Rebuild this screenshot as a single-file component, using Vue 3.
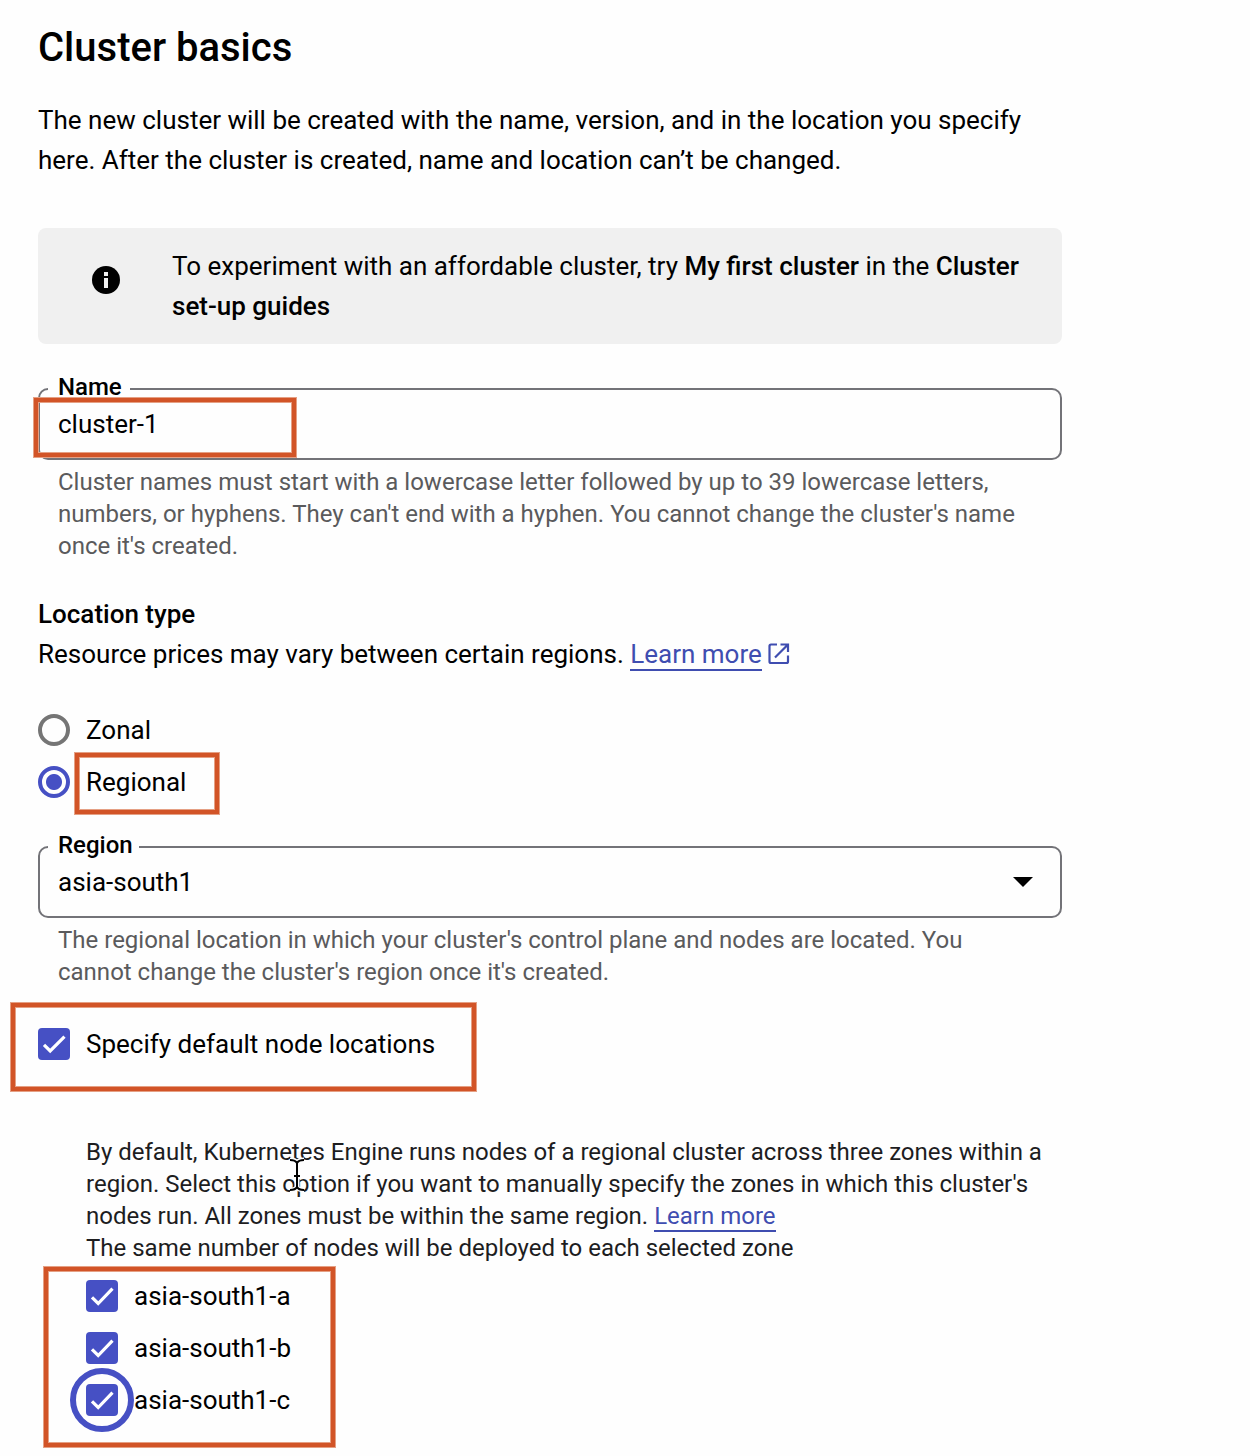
<script setup>
import { ref } from 'vue'

const locationTypes = ['Zonal', 'Regional']
const selected = ref('Regional')
const zones = ['asia-south1-a', 'asia-south1-b', 'asia-south1-c']
const focusedZone = ref('asia-south1-c')
</script>

<template>
  <main class="page">
    <h1 class="title">Cluster basics</h1>
    <p class="body intro">
      The new cluster will be created with the name, version, and in the location you specify<br />
      here. After the cluster is created, name and location can’t be changed.
    </p>

    <section class="notice">
      <svg class="info" width="28" height="28" viewBox="0 0 28 28">
        <circle cx="14" cy="14" r="14" />
        <path d="M12 6h4v4h-4zM12 12h4v10h-4z" fill="#f0f0f0" />
      </svg>
      <p class="body notice-text">
        To experiment with an affordable cluster, try <b>My first cluster</b> in the <b>Cluster<br />
        set-up guides</b>
      </p>
    </section>

    <div class="field name-field">
      <span class="label">Name</span>
      <span class="value">cluster-1</span>
      <i class="mark mark-name"></i>
    </div>
    <p class="hint">
      Cluster names must start with a lowercase letter followed by up to 39 lowercase letters,<br />
      numbers, or hyphens. They can't end with a hyphen. You cannot change the cluster's name<br />
      once it's created.
    </p>

    <h2 class="body subtitle">Location type</h2>
    <p class="body">
      Resource prices may vary between certain regions. <a class="link">Learn more</a>
      <svg class="external" width="22" height="22" viewBox="0 0 22 22" fill="none" stroke="#3f4db0" stroke-width="2.2">
        <path d="M9 1.500H3Q1.500 1.500 1.500 3V18.500Q1.500 20 3 20H18.500Q20 20 20 18.500V12.500M12.500 1.500H20V9M20 1.500L7 14.500" />
      </svg>
    </p>

    <div class="radios">
      <div v-for="type in locationTypes" :key="type" class="option">
        <span class="radio" :class="{ on: type === selected }"></span>
        <span>{{ type }}</span>
        <i v-if="type === selected" class="mark mark-radio"></i>
      </div>
    </div>

    <div class="field region-field">
      <span class="label region-label">Region</span>
      <span class="value">asia-south1</span>
      <svg class="arrow" width="20" height="10" viewBox="0 0 20 10"><path d="M0 0H20L10 10Z" /></svg>
    </div>
    <p class="hint">
      The regional location in which your cluster's control plane and nodes are located. You<br />
      cannot change the cluster's region once it's created.
    </p>

    <div class="option specify">
      <span class="check">
        <svg width="32" height="32" viewBox="0 0 32 32"><path d="M6 16.800L12.200 23L26.500 8.700" /></svg>
      </span>
      <span>Specify default node locations</span>
      <i class="mark mark-specify"></i>
    </div>

    <section class="nodes">
      <p class="hint detail">
        By default, Kubernetes Engine runs nodes of a regional cluster across three zones within a<br />
        region. Select this option if you want to manually specify the zones in which this cluster's<br />
        nodes run. All zones must be within the same region. <a class="link">Learn more</a><br />
        The same number of nodes will be deployed to each selected zone
      </p>
      <svg class="cursor" width="22" height="42" viewBox="0 0 22 42" fill="none">
        <path d="M4 5Q9.500 5 11 8Q12.500 5 18 5M11 7V33M4 35Q9.500 35 11 32Q12.500 35 18 35M7 21H15" stroke="#fefefe" stroke-width="5" />
        <path d="M4 5Q9.500 5 11 8Q12.500 5 18 5M11 7V33M4 35Q9.500 35 11 32Q12.500 35 18 35M8 21H14" stroke="#000" stroke-width="2" />
      </svg>
      <div class="zones">
        <div v-for="zone in zones" :key="zone" class="option">
          <span class="check" :class="{ focused: zone === focusedZone }">
            <svg width="32" height="32" viewBox="0 0 32 32"><path d="M6 17.300L12.200 23.500L26.500 8.700" /></svg>
          </span>
          <span>{{ zone }}</span>
        </div>
        <i class="mark mark-zones"></i>
      </div>
    </section>
  </main>
</template>

<style>
body {
  margin: 0;
  background: #fefefe;
}
</style>

<style scoped>
.page {
  box-sizing: border-box;
  width: 1250px;
  height: 1456px;
  padding: 20px 188px 0 38px;
  overflow: hidden;
  background: #fefefe;
  color: #000;
  font-family: Roboto, sans-serif;
}
h1, h2, p {
  margin: 0;
}
.title {
  height: 56px;
  font-size: 40px;
  font-weight: 500;
  line-height: 56px;
}
.body, .option, .value {
  font-size: 26px;
  line-height: 40px;
  white-space: nowrap;
}
.intro {
  margin-top: 24px;
}
b {
  font-weight: 500;
}
.notice {
  display: flex;
  align-items: flex-start;
  box-sizing: border-box;
  height: 116px;
  margin-top: 48px;
  padding: 18px 0 0 54px;
  border-radius: 8px;
  background: #f0f0f0;
}
.info {
  margin-top: 20px;
}
.notice-text {
  margin-left: 52px;
}
.field {
  position: relative;
  display: flex;
  align-items: center;
  justify-content: space-between;
  box-sizing: border-box;
  height: 72px;
  padding: 0 27px 0 18px;
  border: 2px solid #737378;
  border-radius: 10px;
}
.name-field {
  margin-top: 44px;
}
.region-field {
  margin-top: 38px;
}
.label {
  position: absolute;
  top: -19px;
  left: 8px;
  width: 72px;
  padding-left: 10px;
  background: #fefefe;
  font-size: 24px;
  font-weight: 500;
  line-height: 32px;
}
.region-label {
  width: 81px;
}
.hint {
  margin-top: 6px;
  padding-left: 20px;
  color: #5a5a5c;
  font-size: 24px;
  line-height: 32px;
  white-space: nowrap;
}
.subtitle {
  margin-top: 32px;
  font-weight: 500;
}
.link {
  border-bottom: 2px solid #3f4db0;
  color: #3f4db0;
}
.external {
  margin-left: 6px;
  vertical-align: -2px;
}
.radios {
  margin-top: 30px;
}
.option {
  position: relative;
  display: flex;
  align-items: center;
  gap: 16px;
  height: 52px;
}
.radio {
  box-sizing: border-box;
  width: 32px;
  height: 32px;
  border: 4px solid #757575;
  border-radius: 50%;
}
.radio.on {
  border-color: #4650c4;
  background: radial-gradient(circle, #4650c4 7.500px, #fefefe 8.500px);
}
.specify {
  margin-top: 30px;
}
.check {
  position: relative;
  width: 32px;
  height: 32px;
  border-radius: 4px;
  background: #4650c4;
}
.check svg {
  display: block;
  fill: none;
  stroke: #fff;
  stroke-width: 3.200;
}
.focused::after {
  content: '';
  position: absolute;
  inset: -16px;
  border: 6px solid #4650c4;
  border-radius: 50%;
}
.nodes {
  position: relative;
  margin-top: 66px;
  padding-left: 48px;
}
.detail {
  margin: 0;
  padding: 0;
  color: #1d1d1f;
}
.cursor {
  position: absolute;
  top: 19px;
  left: 248px;
}
.zones {
  position: relative;
  margin-top: 6px;
}
.mark {
  position: absolute;
  box-sizing: border-box;
  border: 4px solid #d25427;
  box-shadow: 0 0 0 1px #e5a084, inset 0 0 0 1px #e5a084;
}
.mark-name {
  top: 8px;
  left: -6px;
  width: 262px;
  height: 59px;
}
.mark-radio {
  top: -3px;
  left: 37px;
  width: 144px;
  height: 61px;
}
.mark-specify {
  top: -15px;
  left: -27px;
  width: 465px;
  height: 88px;
}
.mark-zones {
  top: -3px;
  left: -42px;
  width: 291px;
  height: 180px;
}
</style>
